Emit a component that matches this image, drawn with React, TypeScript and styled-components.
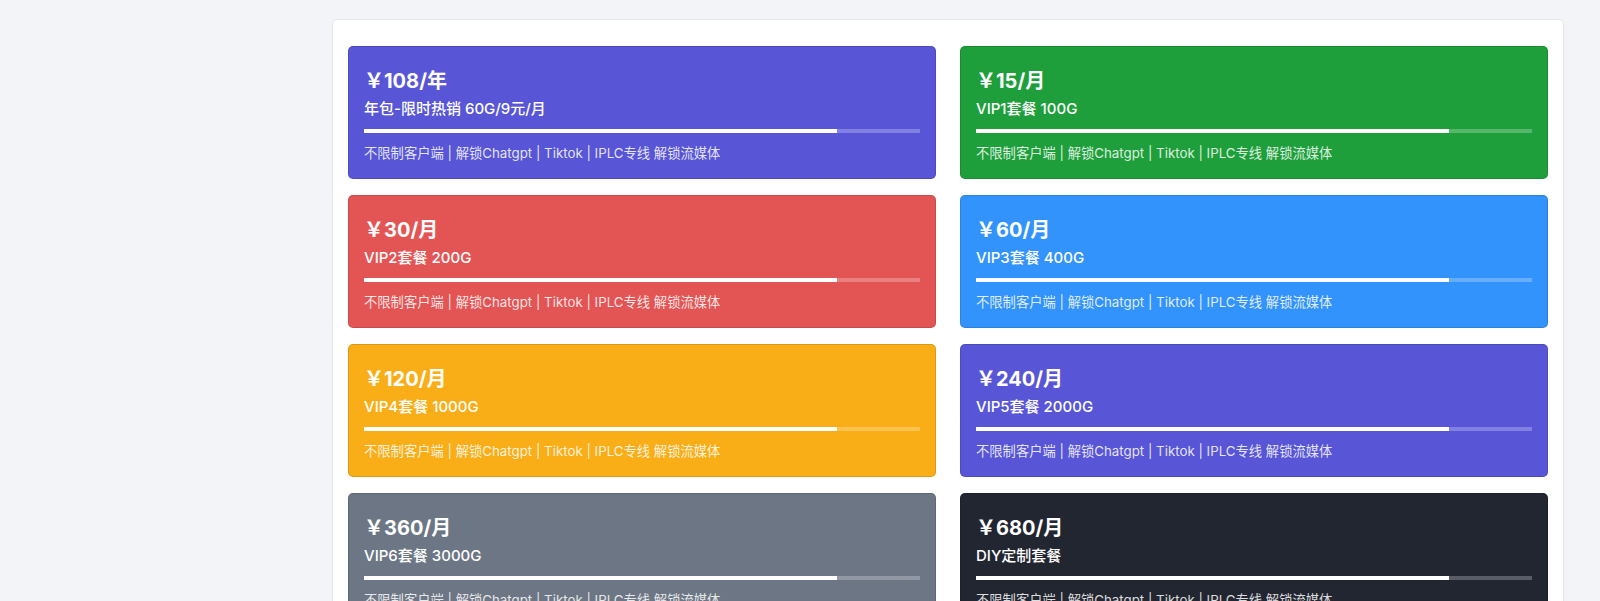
import styled, { createGlobalStyle } from 'styled-components';

const PLANS = [
  { price: '￥108/年', title: '年包-限时热销 60G/9元/月', color: '#5856d6' },
  { price: '￥15/月', title: 'VIP1套餐 100G', color: '#1e9f3b' },
  { price: '￥30/月', title: 'VIP2套餐 200G', color: '#e35555' },
  { price: '￥60/月', title: 'VIP3套餐 400G', color: '#3393fc' },
  { price: '￥120/月', title: 'VIP4套餐 1000G', color: '#f9ae17' },
  { price: '￥240/月', title: 'VIP5套餐 2000G', color: '#5856d6' },
  { price: '￥360/月', title: 'VIP6套餐 3000G', color: '#6c7684' },
  { price: '￥680/月', title: 'DIY定制套餐', color: '#222631' },
];

const DESC = '不限制客户端 | 解锁Chatgpt | Tiktok | IPLC专线 解锁流媒体';

const GlobalStyle = createGlobalStyle`
  html, body {
    margin: 0;
    padding: 0;
    background: #f3f4f7;
    font-family: Inter, "Noto Sans CJK SC", sans-serif;
    -webkit-font-smoothing: antialiased;
  }
`;

const App = () => {
  return (
    <>
      <GlobalStyle />
      <Layout>
        <SideSpace />
        <Main>
          <Panel>
            <PlanGrid>
              {PLANS.map((plan, idx) => (
                <PlanCard key={plan.title + idx.toString()} $color={plan.color}>
                  <Price>{plan.price}</Price>
                  <PlanTitle>{plan.title}</PlanTitle>
                  <Track>
                    <Fill style={{ width: '85%' }} />
                  </Track>
                  <PlanDesc>{DESC}</PlanDesc>
                </PlanCard>
              ))}
            </PlanGrid>
          </Panel>
        </Main>
      </Layout>
    </>
  );
};

export default App;

const Layout = styled.div`
  display: flex;
  width: 100%;
  height: 601px;
  overflow: hidden;
`;

const SideSpace = styled.aside`
  flex: 0 0 332px;
`;

const Main = styled.main`
  flex: 1;
  padding: 19px 36px 0 0;
`;

const Panel = styled.section`
  box-sizing: border-box;
  width: 1232px;
  padding: 26px 15px 40px;

  background: #ffffff;
  border: 1px solid #e3e5ea;
  border-radius: 5px;
`;

const PlanGrid = styled.div`
  display: grid;
  grid-template-columns: 588px 588px;
  column-gap: 24px;
  row-gap: 16px;
`;

const PlanCard = styled.div<{ $color: string }>`
  box-sizing: border-box;
  display: flex;
  flex-direction: column;
  height: 133px;
  padding: 20px 15px 13px;

  color: #ffffff;
  background: ${({ $color }) => $color};
  border: 1px solid rgba(0, 0, 0, 0.12);
  border-radius: 5px;
`;

const Price = styled.div`
  font-size: 20px;
  font-weight: 700;
  line-height: 28px;
`;

const PlanTitle = styled.div`
  margin-top: 2px;
  font-size: 15px;
  font-weight: 500;
  line-height: 24px;
`;

const Track = styled.div`
  height: 4px;
  margin-top: 8px;

  background: rgba(255, 255, 255, 0.25);
`;

const Fill = styled.div`
  height: 100%;
  background: #ffffff;
`;

const PlanDesc = styled.div`
  margin-top: 10px;
  font-size: 13.3px;
  line-height: 20px;
  color: rgba(255, 255, 255, 0.85);
`;
